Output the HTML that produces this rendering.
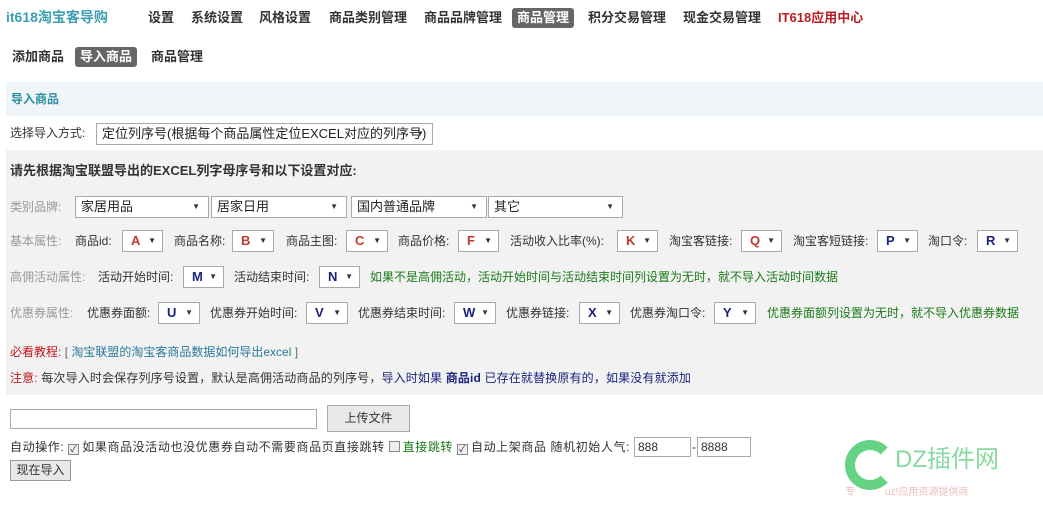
<!DOCTYPE html>
<html><head><meta charset="utf-8"><style>
*{box-sizing:border-box;margin:0;padding:0}
body{width:1043px;height:506px;background:#fff;font-family:"Liberation Sans","Noto Sans CJK SC",sans-serif;font-size:12px;color:#333;position:relative;overflow:hidden}
.a{position:absolute;white-space:nowrap;line-height:20px}
.nav{font-size:13px;font-weight:bold;color:#333}
.act{background:#666;color:#fff;border-radius:3px;padding:0 5px}
.g{color:#999}
.sel{position:absolute;height:22px;border:1px solid #a9a9a9;background:#fff;font-weight:bold;font-size:13px;line-height:20px;padding-left:8px}
.sel::after{content:"▼";position:absolute;right:6px;top:0;font-size:8px;color:#333}
.r{color:#c0392b}.b{color:#1a237e}
.big{position:absolute;height:22px;border:1px solid #a9a9a9;background:#fff;font-size:13px;line-height:20px;padding-left:5px;color:#222}
.big::after{content:"▼";position:absolute;right:8px;top:0;font-size:8px;color:#333}
.grn{color:#1a7a1a}
.cb{display:inline-block;width:11px;height:11px;border:1px solid #888;background:#eee;vertical-align:-1px;margin-right:3px;font-size:9px;line-height:9px;text-align:center}
</style></head><body>
<div class="a" style="left:6px;top:7px;font-size:14px;font-weight:bold;color:#3a9fb0">it618淘宝客导购</div>
<div class="a nav" style="left:148px;top:8px">设置</div>
<div class="a nav" style="left:191px;top:8px">系统设置</div>
<div class="a nav" style="left:259px;top:8px">风格设置</div>
<div class="a nav" style="left:329px;top:8px">商品类别管理</div>
<div class="a nav" style="left:424px;top:8px">商品品牌管理</div>
<div class="a nav act" style="left:512px;top:8px">商品管理</div>
<div class="a nav" style="left:588px;top:8px">积分交易管理</div>
<div class="a nav" style="left:683px;top:8px">现金交易管理</div>
<div class="a nav" style="left:778px;top:8px;color:#b81c25">IT618应用中心</div>

<div class="a nav" style="left:12px;top:47px">添加商品</div>
<div class="a nav act" style="left:75px;top:47px">导入商品</div>
<div class="a nav" style="left:151px;top:47px">商品管理</div>

<div style="position:absolute;left:6px;top:82px;width:1037px;height:34px;background:#f0f5fa"></div>
<div class="a" style="left:11px;top:89px;font-weight:bold;color:#2a8fa0">导入商品</div>

<div class="a" style="left:10px;top:123px">选择导入方式:</div>
<div class="big" style="left:96px;top:123px;width:337px">定位列序号(根据每个商品属性定位EXCEL对应的列序号)</div>

<div style="position:absolute;left:6px;top:150px;width:1037px;height:245px;background:#f2f2f2"></div>
<div class="a" style="left:10px;top:161px;font-weight:bold;font-size:13px">请先根据淘宝联盟导出的EXCEL列字母序号和以下设置对应:</div>

<div class="a g" style="left:10px;top:197px">类别品牌:</div>
<div class="big" style="left:75px;top:196px;width:134px">家居用品</div>
<div class="big" style="left:211px;top:196px;width:136px">居家日用</div>
<div class="big" style="left:351px;top:196px;width:136px">国内普通品牌</div>
<div class="big" style="left:488px;top:196px;width:135px">其它</div>

<div class="a g" style="left:10px;top:231px">基本属性:</div>
<div class="a" style="left:75px;top:231px">商品id:</div><div class="sel r" style="left:122px;top:230px;width:41px">A</div>
<div class="a" style="left:174px;top:231px">商品名称:</div><div class="sel r" style="left:232px;top:230px;width:42px">B</div>
<div class="a" style="left:286px;top:231px">商品主图:</div><div class="sel r" style="left:346px;top:230px;width:42px">C</div>
<div class="a" style="left:398px;top:231px">商品价格:</div><div class="sel r" style="left:458px;top:230px;width:41px">F</div>
<div class="a" style="left:510px;top:231px">活动收入比率(%):</div><div class="sel r" style="left:617px;top:230px;width:41px">K</div>
<div class="a" style="left:669px;top:231px">淘宝客链接:</div><div class="sel r" style="left:741px;top:230px;width:41px">Q</div>
<div class="a" style="left:793px;top:231px">淘宝客短链接:</div><div class="sel b" style="left:877px;top:230px;width:41px">P</div>
<div class="a" style="left:928px;top:231px">淘口令:</div><div class="sel b" style="left:977px;top:230px;width:41px">R</div>

<div class="a g" style="left:10px;top:267px">高佣活动属性:</div>
<div class="a" style="left:98px;top:267px">活动开始时间:</div><div class="sel b" style="left:183px;top:266px;width:41px">M</div>
<div class="a" style="left:234px;top:267px">活动结束时间:</div><div class="sel b" style="left:319px;top:266px;width:41px">N</div>
<div class="a grn" style="left:370px;top:267px">如果不是高佣活动，活动开始时间与活动结束时间列设置为无时，就不导入活动时间数据</div>

<div class="a g" style="left:10px;top:303px">优惠券属性:</div>
<div class="a" style="left:87px;top:303px">优惠券面额:</div><div class="sel b" style="left:158px;top:302px;width:42px">U</div>
<div class="a" style="left:210px;top:303px">优惠券开始时间:</div><div class="sel b" style="left:306px;top:302px;width:42px">V</div>
<div class="a" style="left:358px;top:303px">优惠券结束时间:</div><div class="sel b" style="left:454px;top:302px;width:42px">W</div>
<div class="a" style="left:506px;top:303px">优惠券链接:</div><div class="sel b" style="left:579px;top:302px;width:41px">X</div>
<div class="a" style="left:630px;top:303px">优惠券淘口令:</div><div class="sel b" style="left:714px;top:302px;width:42px">Y</div>
<div class="a grn" style="left:767px;top:303px">优惠券面额列设置为无时，就不导入优惠券数据</div>

<div class="a" style="left:10px;top:342px"><span style="color:#c0171f">必看教程:</span> <span style="color:#666">[</span> <span style="color:#2a7a9a">淘宝联盟的淘宝客商品数据如何导出excel</span> <span style="color:#666">]</span></div>
<div class="a" style="left:10px;top:368px;letter-spacing:0.15px"><span style="color:#c0171f">注意:</span> 每次导入时会保存列序号设置，默认是高佣活动商品的列序号，<span style="color:#1a237e">导入时如果 <b>商品id</b> 已存在就替换原有的，如果没有就添加</span></div>

<div style="position:absolute;left:10px;top:409px;width:307px;height:20px;border:1px solid #a9a9a9;background:#fff"></div>
<div class="a" style="left:327px;top:405px;width:83px;height:27px;border:1px solid #aaa;background:#e8e8e8;text-align:center;line-height:25px">上传文件</div>

<div class="a" style="left:10px;top:437px;letter-spacing:0.6px">自动操作: <span class="cb">✓</span>如果商品没活动也没优惠券自动不需要商品页直接跳转 <span class="cb"></span><span class="grn">直接跳转</span> <span class="cb">✓</span>自动上架商品 随机初始人气:</div>
<div style="position:absolute;left:634px;top:437px;width:57px;height:20px;border:1px solid #a9a9a9;background:#fff;line-height:18px;padding-left:3px">888</div>
<div class="a" style="left:692px;top:437px">-</div>
<div style="position:absolute;left:697px;top:437px;width:54px;height:20px;border:1px solid #a9a9a9;background:#fff;line-height:18px;padding-left:3px">8888</div>
<div class="a" style="left:10px;top:460px;width:61px;height:21px;border:1px solid #999;background:#e8e8e8;text-align:center;line-height:19px">现在导入</div>

<div style="position:absolute;left:845px;top:440px;width:50px;height:50px;border-radius:50%;border:10px solid #4ccb6e;border-right-color:transparent;opacity:.85"></div>
<div class="a" style="left:895px;top:450px;font-size:24px;color:#6bd08a;opacity:.8">DZ插件网</div>
<div class="a" style="left:845px;top:483px;font-size:10px;color:#e8a0a0;opacity:.7">专　　　uz!应用资源提供商</div>
</body></html>
